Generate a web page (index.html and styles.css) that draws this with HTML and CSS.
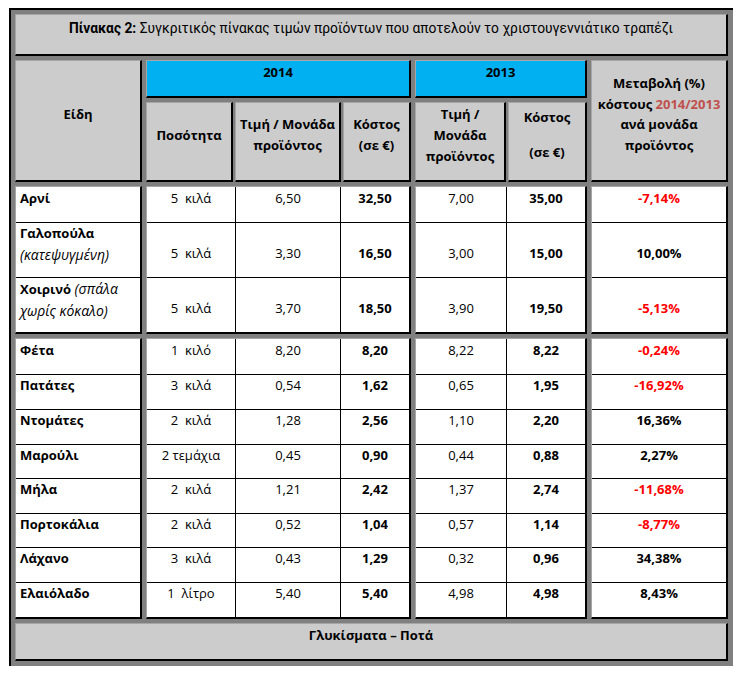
FILE: index.html
```html
<!DOCTYPE html>
<html lang="el">
<head>
<meta charset="utf-8">
<title>Πίνακας 2</title>
<link rel="stylesheet" href="styles.css">
</head>
<body>
<div class="frame">
  <div class="cell hdr title"><span><b>Πίνακας 2:</b> Συγκριτικός πίνακας τιμών προϊόντων που αποτελούν το χριστουγεννιάτικο τραπέζι</span></div>

  <div class="cell hdr eidi"><span>Είδη</span></div>
  <div class="cell hdr year"><span>2014</span></div>
  <div class="cell hdr year"><span>2013</span></div>
  <div class="cell hdr change"><span>Μεταβολή (%)<br>κόστους <span class="yr">2014/2013</span><br>ανά μονάδα<br>προϊόντος</span></div>

  <div class="subs s14">
    <div class="cell hdr"><span>Ποσότητα</span></div>
    <div class="cell hdr"><span>Τιμή / Μονάδα<br>προϊόντος</span></div>
    <div class="cell hdr"><span>Κόστος<br>(σε €)</span></div>
  </div>
  <div class="subs s13">
    <div class="cell hdr"><span>Τιμή /<br>Μονάδα<br>προϊόντος</span></div>
    <div class="cell hdr"><span>Κόστος<span class="sp">(σε €)</span></span></div>
  </div>

  <!-- section 1 -->
  <div class="cell data names sec1">
    <div class="row"><div class="c"><span><b>Αρνί</b></span></div></div>
    <div class="row"><div class="c"><span><b>Γαλοπούλα</b><br><i>(κατεψυγμένη)</i></span></div></div>
    <div class="row"><div class="c"><span><b>Χοιρινό</b> <i>(σπάλα<br>χωρίς κόκαλο)</i></span></div></div>
  </div>
  <div class="cell data g14 sec1">
    <div class="row"><div class="c">5&nbsp; κιλά</div><div class="c">6,50</div><div class="c b">32,50</div></div>
    <div class="row"><div class="c">5&nbsp; κιλά</div><div class="c">3,30</div><div class="c b">16,50</div></div>
    <div class="row"><div class="c">5&nbsp; κιλά</div><div class="c">3,70</div><div class="c b">18,50</div></div>
  </div>
  <div class="cell data g13 sec1">
    <div class="row"><div class="c">7,00</div><div class="c b">35,00</div></div>
    <div class="row"><div class="c">3,00</div><div class="c b">15,00</div></div>
    <div class="row"><div class="c">3,90</div><div class="c b">19,50</div></div>
  </div>
  <div class="cell data pct sec1">
    <div class="row"><div class="c b neg">-7,14%</div></div>
    <div class="row"><div class="c b">10,00%</div></div>
    <div class="row"><div class="c b neg">-5,13%</div></div>
  </div>

  <!-- section 2 -->
  <div class="cell data names sec2">
    <div class="row"><div class="c"><b>Φέτα</b></div></div>
    <div class="row"><div class="c"><b>Πατάτες</b></div></div>
    <div class="row"><div class="c"><b>Ντομάτες</b></div></div>
    <div class="row"><div class="c"><b>Μαρούλι</b></div></div>
    <div class="row"><div class="c"><b>Μήλα</b></div></div>
    <div class="row"><div class="c"><b>Πορτοκάλια</b></div></div>
    <div class="row"><div class="c"><b>Λάχανο</b></div></div>
    <div class="row"><div class="c"><b>Ελαιόλαδο</b></div></div>
  </div>
  <div class="cell data g14 sec2">
    <div class="row"><div class="c">1&nbsp; κιλό</div><div class="c">8,20</div><div class="c b">8,20</div></div>
    <div class="row"><div class="c">3&nbsp; κιλά</div><div class="c">0,54</div><div class="c b">1,62</div></div>
    <div class="row"><div class="c">2&nbsp; κιλά</div><div class="c">1,28</div><div class="c b">2,56</div></div>
    <div class="row"><div class="c">2 τεμάχια</div><div class="c">0,45</div><div class="c b">0,90</div></div>
    <div class="row"><div class="c">2&nbsp; κιλά</div><div class="c">1,21</div><div class="c b">2,42</div></div>
    <div class="row"><div class="c">2&nbsp; κιλά</div><div class="c">0,52</div><div class="c b">1,04</div></div>
    <div class="row"><div class="c">3&nbsp; κιλά</div><div class="c">0,43</div><div class="c b">1,29</div></div>
    <div class="row"><div class="c">1&nbsp; λίτρο</div><div class="c">5,40</div><div class="c b">5,40</div></div>
  </div>
  <div class="cell data g13 sec2">
    <div class="row"><div class="c">8,22</div><div class="c b">8,22</div></div>
    <div class="row"><div class="c">0,65</div><div class="c b">1,95</div></div>
    <div class="row"><div class="c">1,10</div><div class="c b">2,20</div></div>
    <div class="row"><div class="c">0,44</div><div class="c b">0,88</div></div>
    <div class="row"><div class="c">1,37</div><div class="c b">2,74</div></div>
    <div class="row"><div class="c">0,57</div><div class="c b">1,14</div></div>
    <div class="row"><div class="c">0,32</div><div class="c b">0,96</div></div>
    <div class="row"><div class="c">4,98</div><div class="c b">4,98</div></div>
  </div>
  <div class="cell data pct sec2">
    <div class="row"><div class="c b neg">-0,24%</div></div>
    <div class="row"><div class="c b neg">-16,92%</div></div>
    <div class="row"><div class="c b">16,36%</div></div>
    <div class="row"><div class="c b">2,27%</div></div>
    <div class="row"><div class="c b neg">-11,68%</div></div>
    <div class="row"><div class="c b neg">-8,77%</div></div>
    <div class="row"><div class="c b">34,38%</div></div>
    <div class="row"><div class="c b">8,43%</div></div>
  </div>

  <div class="cell hdr footer"><span>Γλυκίσματα – Ποτά</span></div>
</div>
</body>
</html>
```
FILE: styles.css
```css
* { box-sizing: border-box; }

body {
  margin: 0;
  padding: 8px 0 0 9px;
  background: #fff;
  color: #000;
  font-family: "Open Sans", "Noto Sans", sans-serif;
  font-size: 13px;
}

.frame {
  display: grid;
  width: 724px;
  grid-template-columns: 127px 265px 172px 137px;
  grid-template-rows: 42px 38px 80px 148px 281px 38px;
  gap: 4px;
  background: #808080;
  border-top: 2px solid #000;
  border-left: 2px solid #000;
  padding: 4px 5px 5px 4px;
}

.cell {
  border-top: 1px solid #a6a6a6;
  border-left: 1px solid #a6a6a6;
  border-right: 2px solid #000;
  border-bottom: 2px solid #000;
  background: #ccc;
}

.hdr {
  display: flex;
  flex-direction: column;
  align-items: center;
  justify-content: center;
  text-align: center;
  padding-bottom: 13px;
  font-weight: bold;
  line-height: 21px;
}

.title {
  grid-column: 1 / -1;
  font-family: "Roboto", "Liberation Sans", sans-serif;
  font-size: 13.8px;
  font-weight: normal;
}
.title b { font-weight: bold; }

.eidi { grid-row: 2 / 4; }

.year { background: #00b0f0; }

.change {
  grid-column: 4;
  grid-row: 2 / 4;
  line-height: 20.5px;
}

.yr { color: #c0504d; }

.subs { display: grid; column-gap: 2px; }
.s14 { grid-template-columns: 87px 106px 68px; }
.s13 { grid-template-columns: 91px 79px; }

.sp { display: block; margin-top: 14px; }

.footer { grid-column: 1 / -1; }

.data {
  background: #fff;
  display: flex;
  flex-direction: column;
}

.row { display: grid; }
.row + .row { border-top: 1px solid #000; }

.sec1 .row:nth-child(1) { height: 35px; }
.sec1 .row:nth-child(2),
.sec1 .row:nth-child(3) { height: 55px; }

.sec2 .row { height: 35px; }
.sec2 .row:nth-child(4),
.sec2 .row:nth-child(6) { height: 34px; }

.g14 .row { grid-template-columns: 88px 105px 69px; }
.g13 .row { grid-template-columns: 90px 79px; }
.names .row, .pct .row { grid-template-columns: 1fr; }

.c {
  display: flex;
  align-items: center;
  justify-content: center;
  padding-bottom: 13px;
  line-height: 21px;
  white-space: nowrap;
}
.c + .c { border-left: 1px solid #000; }

.sec1.g14 .c, .sec1.g13 .c, .sec1.pct .c { align-items: flex-end; }

.names .c { justify-content: flex-start; padding-left: 4px; }
.names i { font-size: 14px; }

.b { font-weight: bold; }
.neg { color: #f00; }
```
